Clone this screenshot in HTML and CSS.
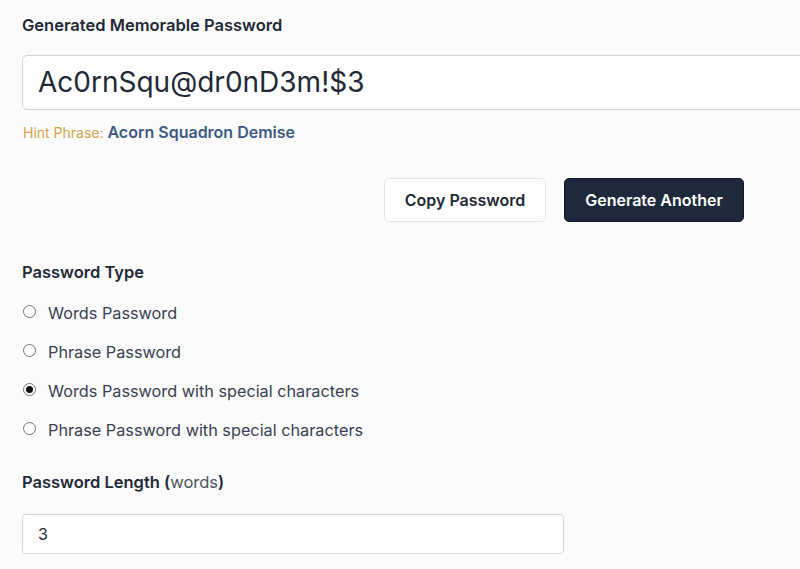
FILE: index.html
```html
<!DOCTYPE html>
<html>
<head>
<meta charset="utf-8">
<link rel="stylesheet" href="styles.css">
</head>
<body>
<div class="page">
  <section class="result">
    <h2 class="label">Generated Memorable Password</h2>
    <div class="pw-box">Ac0rnSqu@dr0nD3m!$3</div>
    <p class="hint"><span class="hint-label">Hint Phrase:</span> <span class="hint-value">Acorn Squadron Demise</span></p>
    <div class="actions">
      <button class="btn btn-light">Copy Password</button>
      <button class="btn btn-dark">Generate Another</button>
    </div>
  </section>
  <section class="type">
    <h2 class="label">Password Type</h2>
    <ul class="radios">
      <li class="radio"><span class="dot"></span>Words Password</li>
      <li class="radio"><span class="dot"></span>Phrase Password</li>
      <li class="radio"><span class="dot checked"></span>Words Password with special characters</li>
      <li class="radio"><span class="dot"></span>Phrase Password with special characters</li>
    </ul>
  </section>
  <section class="length">
    <h2 class="label">Password Length (<span class="light">words</span>)</h2>
    <div class="num-box">3</div>
  </section>
</div>
</body>
</html>
```
FILE: styles.css
```css
* { box-sizing: border-box; }
html, body { margin: 0; padding: 0; }
body {
  background: #fbfbfb;
  font-family: Inter, "Noto Sans", sans-serif;
  color: #1f2937;
  width: 800px;
  overflow: hidden;
}
.page {
  padding: 14px 0 0 22px;
  width: 900px;
}
.label {
  margin: 0;
  font-size: 16.5px;
  font-weight: 600;
  color: #1f2937;
  line-height: 22px;
}
.pw-box {
  margin-top: 19px;
  height: 55px;
  width: 860px;
  background: #fff;
  border: 1px solid #d1d5db;
  border-radius: 5px;
  padding: 0 15px;
  font-size: 28px;
  line-height: 53px;
  color: #1f2937;
}
.hint {
  margin: 12px 0 0 1px;
  font-size: 14px;
  line-height: 20px;
}
.hint-label { color: #d4a24c; }
.hint-value { color: #3d5a80; font-weight: 600; font-size: 16px; }
.actions {
  display: flex;
  gap: 18px;
  margin: 35px 0 0 362px;
}
.btn {
  font-family: Inter, "Noto Sans", sans-serif;
  font-size: 16px;
  font-weight: 600;
  height: 44px;
  border-radius: 5px;
  padding: 0 19px;
  cursor: pointer;
}
.btn-light {
  background: #fff;
  border: 1px solid #e2e4e8;
  color: #1f2937;
  width: 162px;
}
.btn-dark {
  background: #1e293b;
  border: 1px solid #111827;
  color: #fff;
  width: 180px;
}
.type { margin-top: 39px; }
.radios {
  list-style: none;
  margin: 19px 0 0 0;
  padding: 0;
  display: flex;
  flex-direction: column;
  gap: 17px;
}
.radio {
  display: flex;
  align-items: center;
  font-size: 16.25px;
  line-height: 22px;
  color: #374151;
}
.dot {
  width: 13px;
  height: 13px;
  border: 1px solid #6b7280;
  border-radius: 50%;
  background: #fff;
  margin: 0 12px 0 1px;
  display: flex;
  align-items: center;
  justify-content: center;
  position: relative;
  top: -2px;
}
.dot.checked::after {
  content: "";
  width: 7px;
  height: 7px;
  border-radius: 50%;
  background: #111;
}
.length { margin-top: 30px; }
.light { font-weight: 400; color: #4b5563; }
.num-box {
  margin-top: 21px;
  width: 542px;
  height: 40px;
  background: #fff;
  border: 1px solid #d1d5db;
  border-radius: 4px;
  padding: 0 15px;
  font-size: 16px;
  line-height: 38px;
  color: #1f2937;
}
```
